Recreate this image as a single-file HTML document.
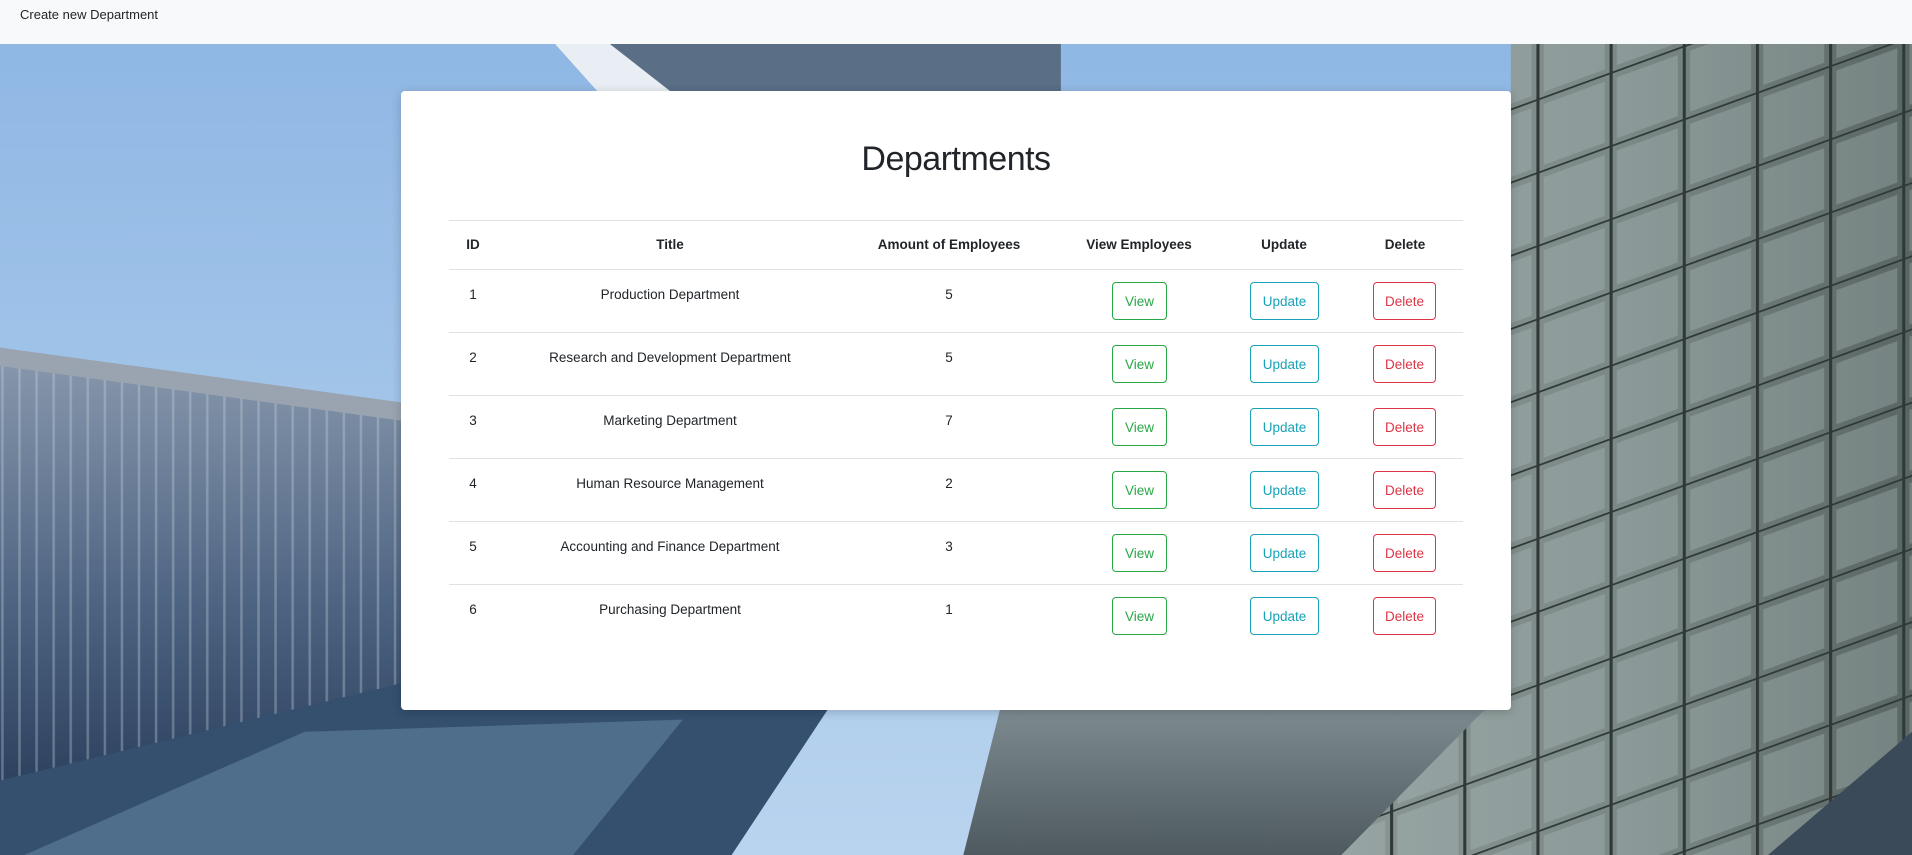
<!DOCTYPE html>
<html><head><meta charset="utf-8"><style>
*{margin:0;padding:0;box-sizing:border-box}
body{width:1912px;height:855px;overflow:hidden;font-family:"Liberation Sans",Arial,sans-serif;color:#212529;position:relative;background:#9cc0e6}
.nav{position:absolute;left:0;top:0;width:1912px;height:44px;background:#f8f9fa;z-index:2}
.nav span{position:absolute;left:20px;top:7px;font-size:13px;color:#212529}
svg.bg{position:absolute;left:0;top:0;width:1912px;height:855px}
.card{position:absolute;left:401px;top:91px;width:1110px;height:619px;background:#fff;border-radius:4px;box-shadow:0 2px 10px rgba(0,0,0,.2)}
h1{position:absolute;top:140px;text-align:center;font-weight:400;font-size:34px;letter-spacing:-0.5px}
.line{position:absolute;left:449px;width:1014px;height:1px;background:#dee2e6}
.c{position:absolute;transform:translateX(-50%);white-space:nowrap;font-size:13.5px}
.h{font-weight:bold}
.b{position:absolute;height:38px;border:1px solid;border-radius:4px;font-size:13.5px;display:flex;align-items:center;justify-content:center;background:#fff}
.v{border-color:#28a745;color:#28a745;width:55px;left:1112px}
.u{border-color:#17a2b8;color:#17a2b8;width:69px;left:1250px}
.d{border-color:#dc3545;color:#dc3545;width:63px;left:1373px}
</style></head><body>
<svg class="bg" viewBox="0 0 1568 701" preserveAspectRatio="none">
<defs><linearGradient id="sky" x1="0" y1="0" x2="0" y2="1"><stop offset="0" stop-color="#8db6e4"/><stop offset="1" stop-color="#b9d4ee"/></linearGradient>
<linearGradient id="lb" x1="0" y1="0" x2="0" y2="1"><stop offset="0" stop-color="#8a9aae"/><stop offset=".5" stop-color="#4d6482"/><stop offset="1" stop-color="#1f3450"/></linearGradient>
<linearGradient id="rb" x1="0" y1="0" x2="1" y2="0"><stop offset="0" stop-color="#8a9694"/><stop offset=".5" stop-color="#7a8886"/><stop offset="1" stop-color="#5a6664"/></linearGradient>
<linearGradient id="mb" x1="0" y1="0" x2="0" y2="1"><stop offset="0" stop-color="#7d8a90"/><stop offset="1" stop-color="#4e5a60"/></linearGradient>
<pattern id="vl" width="14" height="20" patternUnits="userSpaceOnUse"><line x1="2" y1="0" x2="2" y2="20" stroke="#c8d3de" stroke-opacity=".35" stroke-width="2"/></pattern>
<pattern id="gr" width="60" height="60" patternUnits="userSpaceOnUse" patternTransform="skewY(-20)"><line x1="0" y1="0" x2="0" y2="60" stroke="#2f3836" stroke-width="5"/><line x1="0" y1="0" x2="60" y2="0" stroke="#2f3836" stroke-width="3"/><rect x="6" y="6" width="50" height="50" fill="#b5c6c4" fill-opacity=".3"/></pattern>
</defs>
<rect width="1568" height="701" fill="url(#sky)"/>
<polygon points="455,36 870,36 870,75 490,75" fill="#5a6e86"/>
<polygon points="455,36 500,36 550,75 490,75" fill="#e8eef4"/>
<polygon points="0,285 330,335 330,701 0,701" fill="url(#lb)"/>
<polygon points="0,285 330,335 330,701 0,701" fill="url(#vl)"/>
<polygon points="0,285 330,330 330,345 0,300" fill="#9aa4b0"/>
<polygon points="0,640 330,560 680,580 600,701 0,701" fill="#34506e"/>
<polygon points="20,701 250,600 560,590 470,701" fill="#4f6e8c"/>
<polygon points="790,701 820,582 1240,582 1240,701" fill="url(#mb)"/>
<polygon points="1239,36 1568,36 1568,701 1100,701 1239,560" fill="url(#rb)"/>
<polygon points="1239,36 1568,36 1568,701 1100,701 1239,560" fill="url(#gr)"/>
<polygon points="1450,701 1568,600 1568,701" fill="#3a4a58"/>
</svg>
<div class="nav"><span>Create new Department</span></div>
<div class="card"></div>
<h1 style="z-index:3;left:401px;width:1110px">Departments</h1>
<div style="position:absolute;left:0;top:0;width:1912px;height:855px;z-index:3">
<div class="line" style="top:220px"></div>
<div class="line" style="top:269px"></div>
<div class="c h" style="left:473px;top:237px">ID</div>
<div class="c h" style="left:670px;top:237px">Title</div>
<div class="c h" style="left:949px;top:237px">Amount of Employees</div>
<div class="c h" style="left:1139px;top:237px">View Employees</div>
<div class="c h" style="left:1284px;top:237px">Update</div>
<div class="c h" style="left:1405px;top:237px">Delete</div>
<div class="c" style="left:473px;top:287px">1</div><div class="c" style="left:670px;top:287px">Production Department</div><div class="c" style="left:949px;top:287px">5</div>
<div class="b v" style="top:282px">View</div><div class="b u" style="top:282px">Update</div><div class="b d" style="top:282px">Delete</div>
<div class="line" style="top:332px"></div>
<div class="c" style="left:473px;top:350px">2</div><div class="c" style="left:670px;top:350px">Research and Development Department</div><div class="c" style="left:949px;top:350px">5</div>
<div class="b v" style="top:345px">View</div><div class="b u" style="top:345px">Update</div><div class="b d" style="top:345px">Delete</div>
<div class="line" style="top:395px"></div>
<div class="c" style="left:473px;top:413px">3</div><div class="c" style="left:670px;top:413px">Marketing Department</div><div class="c" style="left:949px;top:413px">7</div>
<div class="b v" style="top:408px">View</div><div class="b u" style="top:408px">Update</div><div class="b d" style="top:408px">Delete</div>
<div class="line" style="top:458px"></div>
<div class="c" style="left:473px;top:476px">4</div><div class="c" style="left:670px;top:476px">Human Resource Management</div><div class="c" style="left:949px;top:476px">2</div>
<div class="b v" style="top:471px">View</div><div class="b u" style="top:471px">Update</div><div class="b d" style="top:471px">Delete</div>
<div class="line" style="top:521px"></div>
<div class="c" style="left:473px;top:539px">5</div><div class="c" style="left:670px;top:539px">Accounting and Finance Department</div><div class="c" style="left:949px;top:539px">3</div>
<div class="b v" style="top:534px">View</div><div class="b u" style="top:534px">Update</div><div class="b d" style="top:534px">Delete</div>
<div class="line" style="top:584px"></div>
<div class="c" style="left:473px;top:602px">6</div><div class="c" style="left:670px;top:602px">Purchasing Department</div><div class="c" style="left:949px;top:602px">1</div>
<div class="b v" style="top:597px">View</div><div class="b u" style="top:597px">Update</div><div class="b d" style="top:597px">Delete</div>
</div>
</body></html>
